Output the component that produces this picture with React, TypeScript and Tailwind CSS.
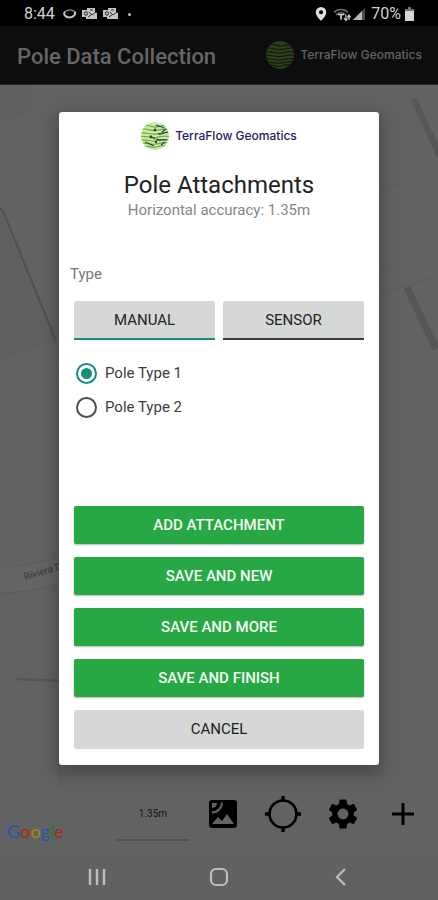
import { useState } from "react";

function GlobeLogo({ bright = false }: { bright?: boolean }) {
  const disc = bright ? "#cdeba2" : "#2e3f1b";
  const line = bright ? "#6da84a" : "#12190c";
  const dark = bright ? "#1d4a45" : "#0f160b";
  const id = bright ? "globe-bright" : "globe-dim";
  return (
    <svg viewBox="0 0 28 28" className="size-7 shrink-0" aria-hidden="true">
      <clipPath id={id}>
        <circle cx="14" cy="14" r="14" />
      </clipPath>
      <g clipPath={`url(#${id})`} fill="none">
        <circle cx="14" cy="14" r="14" fill={disc} />
        <g stroke={line} strokeWidth="1.2">
          <path d="M3 4c5-2 9 2 13 1s7-2 10-1" />
          <path d="M0 7.500c6-2 10 2 15 1s8-2 13-1" />
          <path d="M0 11c6-1 10 2 15 1s8-2 13-1" />
          <path d="M0 14.500c6-1 10 2 15 1s8-2 13-1" />
          <path d="M0 18c6-1 10 2 15 1s8-2 13-1" />
          <path d="M0 21c6 0 10 2 15 1s8-2 13-1" />
          <path d="M3 24c5 0 8 2 12 1s6-2 10-1" />
        </g>
        {bright && (
          <g stroke={dark} strokeWidth="1.200">
            <path d="M15 3c3 2 5 1 8 3M17 12c4 1 6-2 10-2M15 17c4 2 7 0 11 1M9 14l5 3M4 20c4 1 6 3 9 4" />
            <circle cx="14" cy="8" r="1.400" fill={dark} stroke="none" />
            <circle cx="10" cy="15" r="1.400" fill={dark} stroke="none" />
            <circle cx="15" cy="20" r="1.200" fill={dark} stroke="none" />
            <path d="M21 10l4-3M20 23l4-3" />
          </g>
        )}
      </g>
    </svg>
  );
}

function MailBadge() {
  return (
    <svg viewBox="0 0 15 12" className="h-3 w-[15px]" aria-hidden="true">
      <path d="M5 0h8v4l2 1v6H4V9H0V2h5z" fill="#c4c4c4" />
      <circle cx="4" cy="5.500" r="1.700" fill="none" stroke="#222" strokeWidth="1" />
      <path d="M7 4l3 3 4-3M8 2h3M6 9l3-2" fill="none" stroke="#333" strokeWidth="1" />
    </svg>
  );
}

function StatusBar() {
  return (
    <div className="flex h-[26px] shrink-0 items-center bg-black px-6 pt-[2px] text-[#d2d2d2]">
      <span className="text-base leading-5">8:44</span>
      <div className="ml-2 flex items-center gap-[6px]">
        <svg viewBox="0 0 13 12" className="h-3 w-[13px]" aria-hidden="true">
          <path d="M2 3.500C0 6 2 9.500 6.500 9.500S13 6 11.500 3.500" fill="none" stroke="#c4c4c4" strokeWidth="2" />
          <path d="M2 3.500c3-2 7-2 9.500 0" fill="none" stroke="#8a8a8a" strokeWidth="1.200" />
        </svg>
        <MailBadge />
        <MailBadge />
        <span className="ml-1 size-[3px] rounded-full bg-[#bdbdbd]" />
      </div>
      <div className="ml-auto flex items-center gap-[2px]">
        <svg viewBox="0 0 12 14" className="mr-1 h-[14px] w-3" aria-hidden="true">
          <path d="M6 0a5.300 5.300 0 0 1 5.300 5.300C11.300 9 6 14 6 14S.7 9 .7 5.300A5.300 5.300 0 0 1 6 0z" fill="#dedede" />
          <circle cx="6" cy="5.300" r="2" fill="#000" />
        </svg>
        <svg viewBox="0 0 18 13" className="h-[13px] w-[18px]" aria-hidden="true">
          <path d="M1 4.500c4-4 10-4 14 0M3 7c3-3 7-3 10 0" fill="none" stroke="#6e6e6e" strokeWidth="1.500" />
          <path d="M5 6.500h6M8 6.500v5" stroke="#d0d0d0" strokeWidth="1.700" />
          <path d="M13 7v5M11 10l2 2.500 1.500-2M16 12V7.500M14.500 9.500L16 7l1.500 2.500" fill="none" stroke="#d0d0d0" strokeWidth="1.200" />
        </svg>
        <svg viewBox="0 0 12 12" className="h-3 w-3" aria-hidden="true">
          <path d="M0 12L12 0v12z" fill="#4c4c4c" />
          <path d="M0 12L9 3v9z" fill="#b8b8b8" />
        </svg>
        <span className="ml-1 text-base leading-5">70%</span>
        <svg viewBox="0 0 9 14" className="ml-[2px] h-[14px] w-[9px]" aria-hidden="true">
          <path d="M3 0h3v2h3v3H0V2h3z" fill="#747474" />
          <path d="M0 4h9v10H0z" fill="#d6d6d6" />
        </svg>
      </div>
    </div>
  );
}

function AppBar() {
  return (
    <header className="flex h-[59px] shrink-0 items-center justify-between border-b border-[#2a2b2b] bg-[#0d0d0d] pt-1 pr-4 pl-[17px]">
      <h1 className="text-[22px] leading-7 font-medium text-[#666]">Pole Data Collection</h1>
      <div className="flex items-center gap-[6px] pb-1">
        <GlobeLogo />
        <span className="font-[Inter,sans-serif] text-xs font-medium text-[#646464]">TerraFlow Geomatics</span>
      </div>
    </header>
  );
}

function MapCanvas() {
  return (
    <svg
      viewBox="0 0 438 768"
      preserveAspectRatio="xMidYMid slice"
      className="absolute inset-0 size-full"
      aria-hidden="true"
    >
      <rect width="438" height="768" fill="#616362" />
      <path d="M0 0h28l4 24L0 38z" fill="#606161" />
      <path d="M0 123l3 2 54 130-57 20z" fill="#606060" />
      <path d="M0 38l32-14-4-24" fill="none" stroke="#5d5e5e" />
      <path d="M-2 122l5 4 53 130" fill="none" stroke="#505251" strokeWidth="2" />
      <path d="M0 482c24 2 40-4 60-10v25c-20 6-40 12-60 10z" fill="#646565" />
      <path d="M0 481c24 2 40-4 60-10M0 508c24 0 40-4 60-11" fill="none" stroke="#5b5d5c" />
      <path d="M17 594l43 2" stroke="#535554" strokeWidth="2.500" />
      <path d="M61 680v24" stroke="#5a5c5b" />
      <path d="M414 14l26 58" stroke="#555756" strokeWidth="6" />
      <path d="M407 202l29 62" stroke="#555756" strokeWidth="7" />
      <path d="M380 105l36-10M380 183l58-18M380 210l58-20" stroke="#5c5e5d" />
      <text x="25" y="495" transform="rotate(-16 25 495)" fontSize="10" fill="#363737" fontFamily="Roboto, sans-serif">
        Riviera Dr
      </text>
    </svg>
  );
}

function MapTools() {
  return (
    <div className="absolute inset-x-0 bottom-0 flex items-end pr-[5px] pb-3 pl-[7px]">
      <span className="font-[Lato,sans-serif] text-lg leading-5 font-medium">
        <span className="text-[#2a55a8]">G</span>
        <span className="text-[#a52a22]">o</span>
        <span className="text-[#ab8208]">o</span>
        <span className="text-[#2a55a8]">g</span>
        <span className="text-[#217a37]">l</span>
        <span className="text-[#a52a22]">e</span>
      </span>
      <div className="ml-auto flex items-center text-black">
        <button type="button" className="mr-1 h-[54px] w-[72px] border-b-2 border-[#505251] text-[10px] text-[#161616]">
          1.35m
        </button>
        <button type="button" aria-label="Map type" className="grid h-12 w-[60px] place-items-center">
          <svg viewBox="0 0 30 30" className="size-[30px]">
            <rect x="1" y="1" width="28" height="28" rx="3" fill="currentColor" />
            <path d="M4 13.500A10 10 0 0 0 14 3.500" fill="none" stroke="#646464" strokeWidth="2" />
            <path d="M4 9A5 5 0 0 0 9 4H4z" fill="#646464" />
            <path d="M4 25l6-7 4 4 5-7 7 10z" fill="#646464" />
          </svg>
        </button>
        <button type="button" aria-label="Locate me" className="grid h-12 w-[60px] place-items-center">
          <svg viewBox="0 0 36 36" className="size-9" fill="none" stroke="currentColor">
            <circle cx="18" cy="18" r="13.500" strokeWidth="2.600" />
            <path d="M18 0v6M18 30v6M0 18h6M30 18h6" strokeWidth="3.400" />
          </svg>
        </button>
        <button type="button" aria-label="Settings" className="grid h-12 w-[60px] place-items-center">
          <svg viewBox="0 0 24 24" className="size-9" fill="currentColor">
            <path d="M19.140 12.940c.04-.3.06-.61.06-.94 0-.32-.02-.64-.07-.94l2.030-1.580c.18-.14.23-.41.12-.61l-1.920-3.320c-.12-.22-.37-.29-.59-.22l-2.390.96c-.5-.38-1.030-.7-1.620-.94l-.36-2.540c-.04-.24-.24-.41-.48-.41h-3.840c-.24 0-.43.17-.47.41l-.36 2.540c-.59.24-1.130.57-1.620.94l-2.390-.96c-.22-.08-.47 0-.59.22L2.740 8.870c-.12.21-.08.47.12.61l2.030 1.580c-.05.3-.09.63-.09.94s.02.64.07.94l-2.030 1.580c-.18.14-.23.41-.12.61l1.920 3.320c.12.22.37.29.59.22l2.390-.96c.5.38 1.030.7 1.620.94l.36 2.540c.05.24.24.41.48.41h3.840c.24 0 .44-.17.47-.41l.36-2.540c.59-.24 1.130-.56 1.620-.94l2.390.96c.22.08.47 0 .59-.22l1.920-3.320c.12-.22.07-.47-.12-.61l-2.010-1.580zM12 15.600c-1.980 0-3.600-1.620-3.600-3.600s1.620-3.600 3.600-3.600 3.600 1.620 3.600 3.600-1.620 3.600-3.600 3.600z" />
          </svg>
        </button>
        <button type="button" aria-label="Add" className="grid h-12 w-[60px] place-items-center">
          <svg viewBox="0 0 24 24" className="size-6" stroke="currentColor" strokeWidth="3">
            <path d="M12 1v22M1 12h22" />
          </svg>
        </button>
      </div>
    </div>
  );
}

function NavBar() {
  return (
    <nav className="grid h-[47px] shrink-0 grid-cols-[1fr_50px_1fr] items-center bg-[#616161] text-[#bdbdbd]">
      <button type="button" aria-label="Recent apps" className="justify-self-center">
        <svg viewBox="0 0 18 18" className="size-[18px]" stroke="currentColor" strokeWidth="2.400">
          <path d="M2 1v16M9 1v16M16 1v16" />
        </svg>
      </button>
      <button type="button" aria-label="Home" className="justify-self-center">
        <svg viewBox="0 0 20 20" className="size-5" fill="none" stroke="currentColor" strokeWidth="2.200">
          <rect x="2" y="2" width="16" height="16" rx="5" />
        </svg>
      </button>
      <button type="button" aria-label="Back" className="justify-self-center">
        <svg viewBox="0 0 12 18" className="h-[18px] w-3" fill="none" stroke="currentColor" strokeWidth="2.200">
          <path d="M10 1L2 9l8 8" />
        </svg>
      </button>
    </nav>
  );
}

const poleTypes = ["Pole Type 1", "Pole Type 2"];
const saveActions = ["ADD ATTACHMENT", "SAVE AND NEW", "SAVE AND MORE", "SAVE AND FINISH"];
const modes = ["MANUAL", "SENSOR"];

function AttachmentsDialog() {
  const [mode, setMode] = useState("MANUAL");
  const [poleType, setPoleType] = useState("Pole Type 1");
  return (
    <section
      role="dialog"
      aria-labelledby="dialog-title"
      className="w-full rounded-[3px] bg-white px-[15px] pt-[10px] pb-4 shadow-[0_6px_16px_4px_rgba(0,0,0,0.25)]"
    >
      <div className="flex items-center justify-center gap-[6px]">
        <GlobeLogo bright />
        <span className="font-[Inter,sans-serif] text-xs font-medium text-[#221a63]">TerraFlow Geomatics</span>
      </div>
      <h2 id="dialog-title" className="mt-5 text-center text-2xl leading-[30px] text-[#222]">
        Pole Attachments
      </h2>
      <p className="text-center text-[15px] leading-5 text-[#858585]">Horizontal accuracy: 1.35m</p>
      <fieldset>
        <legend className="-ml-1 pt-11 text-[15px] leading-5 text-[#777]">Type</legend>
        <div className="mt-[17px] grid grid-cols-2 gap-2">
          {modes.map((name) => (
            <button
              key={name}
              type="button"
              aria-pressed={mode === name}
              onClick={() => setMode(name)}
              className="h-[39px] rounded-t-[2px] border-b-2 border-[#3f3d40] bg-[#d6d8d7] pt-[2px] text-[15px] text-[#222] aria-pressed:border-[#149078]"
            >
              {name}
            </button>
          ))}
        </div>
        <div className="mt-[17px] ml-[2px] flex flex-col">
          {poleTypes.map((name) => (
            <label key={name} className="flex h-[34px] items-center gap-2 text-[15px] text-[#3c3c3c]">
              <input
                type="radio"
                name="pole-type"
                checked={poleType === name}
                onChange={() => setPoleType(name)}
                className="grid size-[21px] appearance-none place-content-center rounded-full border-2 border-[#4c4c4c] before:size-[11px] before:rounded-full checked:border-[#149078] checked:before:bg-[#149078]"
              />
              {name}
            </label>
          ))}
        </div>
      </fieldset>
      <div className="mt-[81px] flex flex-col gap-[13px]">
        {saveActions.map((name) => (
          <button
            key={name}
            type="button"
            className="h-[38px] rounded-[2px] bg-[#27a844] pt-[2px] text-[15px] font-medium text-[#f2fbf3] shadow-[0_1px_2px_rgba(0,0,0,0.3)]"
          >
            {name}
          </button>
        ))}
        <button type="button" className="h-[39px] rounded-[2px] bg-[#d6d8d7] text-[15px] text-[#222]">
          CANCEL
        </button>
      </div>
    </section>
  );
}

export default function App() {
  return (
    <div className="relative flex min-h-screen flex-col bg-[#616362] font-[Roboto,sans-serif]">
      <StatusBar />
      <AppBar />
      <main className="relative flex-1">
        <MapCanvas />
        <MapTools />
      </main>
      <NavBar />
      <div className="absolute inset-x-0 top-6 bottom-12 flex items-center justify-center px-[59px]">
        <AttachmentsDialog />
      </div>
    </div>
  );
}
